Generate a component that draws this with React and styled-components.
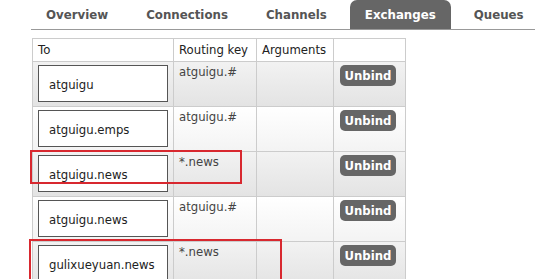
import styled, { createGlobalStyle } from "styled-components";

const Global = createGlobalStyle`
  body {
    margin: 0;
    background: #fff;
    font-family: "DejaVu Sans", Verdana, sans-serif;
    color: #333;
  }
`;

const tabs = ["Overview", "Connections", "Channels", "Exchanges", "Queues"];

const rows = [
  { to: "atguigu", key: "atguigu.#" },
  { to: "atguigu.emps", key: "atguigu.#" },
  { to: "atguigu.news", key: "*.news" },
  { to: "atguigu.news", key: "atguigu.#" },
  { to: "gulixueyuan.news", key: "*.news" },
];

export default function App() {
  return (
    <>
      <Global />
      <Page>
        <Nav>
          {tabs.map((t) => (
            <Tab key={t} active={t === "Exchanges"}>
              {t}
            </Tab>
          ))}
        </Nav>
        <TableWrap>
          <Table>
            <colgroup>
              <Col w={141} />
              <Col w={83} />
              <Col w={77} />
              <Col w={72} />
            </colgroup>
            <thead>
              <tr>
                <Th>To</Th>
                <Th>Routing key</Th>
                <Th>Arguments</Th>
                <Th></Th>
              </tr>
            </thead>
            <tbody>
              {rows.map((r, i) => (
                <Row key={i} alt={i % 2 === 0}>
                  <Td>
                    <Dest>{r.to}</Dest>
                  </Td>
                  <Td>{r.key}</Td>
                  <Td></Td>
                  <Td>
                    <Unbind>Unbind</Unbind>
                  </Td>
                </Row>
              ))}
            </tbody>
          </Table>
          <Mark style={{ left: -2, top: 112, width: 208, height: 30 }} />
          <Mark style={{ left: -3, top: 201, width: 249, height: 44 }} />
        </TableWrap>
      </Page>
    </>
  );
}

const Page = styled.div`
  width: 535px;
  height: 279px;
  overflow: hidden;
`;

const Nav = styled.div`
  display: flex;
  margin-left: 31px;
  height: 29px;
  border-bottom: 1px solid #999;
  align-items: stretch;
`;

const Tab = styled.div`
  padding: 1px 15px 0;
  margin-right: 8px;
  display: flex;
  align-items: center;
  font-size: 11.8px;
  font-weight: bold;
  white-space: nowrap;
  color: ${(p) => (p.active ? "#fff" : "#555")};
  background: ${(p) => (p.active ? "#666" : "transparent")};
  border-radius: 7px 7px 0 0;
`;

const TableWrap = styled.div`
  position: relative;
  margin: 8px 0 0 32px;
`;

const Table = styled.table`
  border-collapse: collapse;
  table-layout: fixed;
  width: 373px;
  font-size: 11.7px;
  border: 1px solid #ccc;
`;

const Col = styled.col`
  width: ${(p) => p.w}px;
`;

const Th = styled.th`
  height: 22px;
  padding: 0 5px;
  text-align: left;
  font-weight: normal;
  border: 1px solid #ccc;
  color: #222;
  background: #fff;
`;

const Row = styled.tr`
  height: 45px;
  background: ${(p) =>
    p.alt
      ? "linear-gradient(#f2f2f2, #e3e3e3)"
      : "linear-gradient(#fff, #f3f3f3)"};
`;

const Td = styled.td`
  border: 1px solid #ccc;
  padding: 3px 5px;
  vertical-align: top;
  color: #444;
  line-height: 15px;
`;

const Dest = styled.div`
  box-sizing: border-box;
  height: 37px;
  border: 1px solid #555;
  background: #fff;
  display: flex;
  align-items: center;
  padding: 3px 10px 0;
  font-size: 11.7px;
  color: #222;
  white-space: nowrap;
`;

const Unbind = styled.button`
  width: 56px;
  height: 21px;
  margin-left: 1px;
  border: none;
  border-radius: 5px;
  background: #666;
  color: #fff;
  font-family: "DejaVu Sans", Verdana, sans-serif;
  font-weight: bold;
  font-size: 11.7px;
  padding: 0;
`;

const Mark = styled.div`
  position: absolute;
  border: 2px solid #d8282f;
  pointer-events: none;
`;
